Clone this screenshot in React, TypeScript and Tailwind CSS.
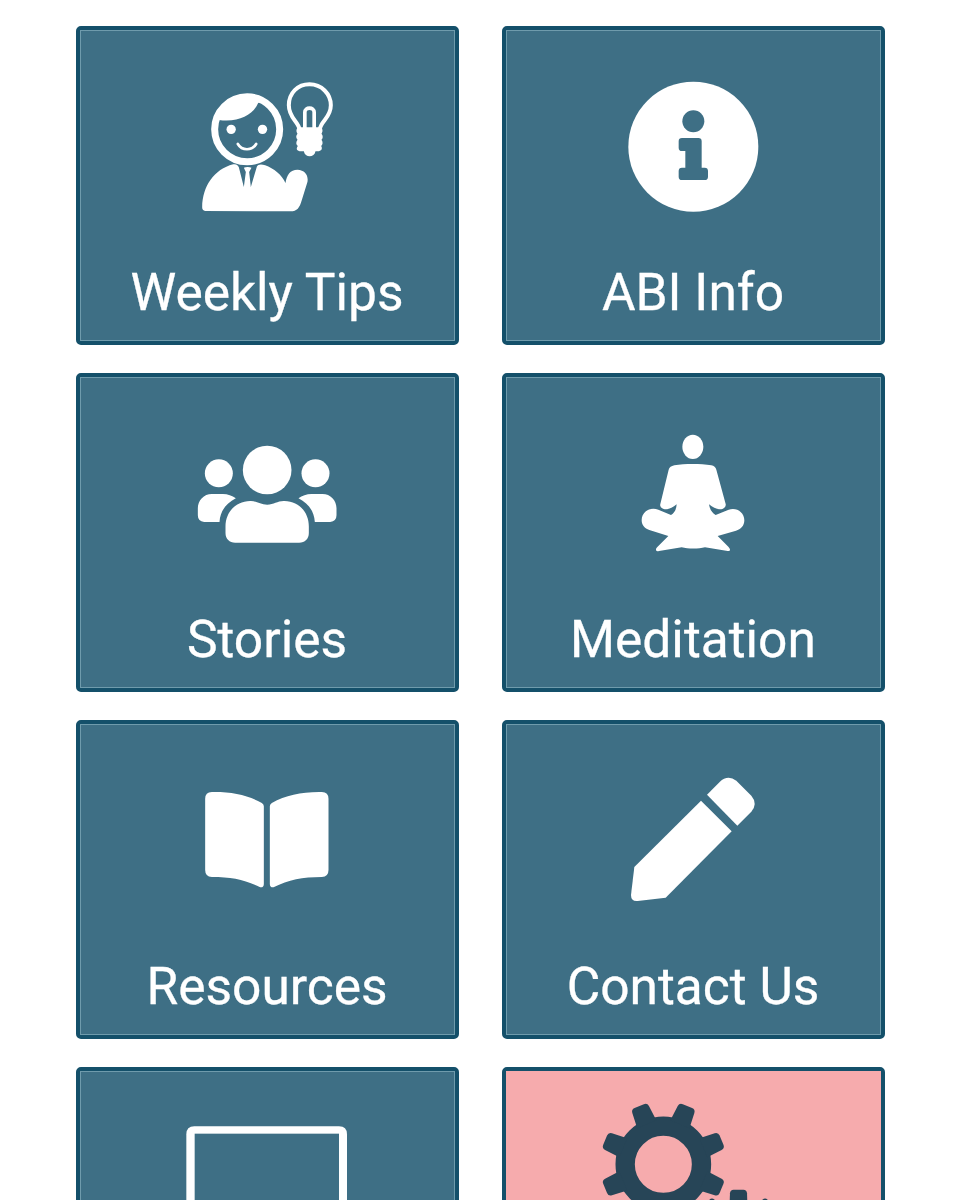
import React from 'react'
import clsx from 'clsx'

type IconProps = {
  viewBox: string
  children: React.ReactNode
}

const Icon = ({ viewBox, children }: IconProps) => (
  <svg viewBox={viewBox} className="w-[160px] h-[150px] overflow-visible" fill="currentColor" aria-hidden="true">
    {children}
  </svg>
)

const TipsIcon = () => (
  <Icon viewBox="-8.5 -1 480 450">
    {/* Head */}
    <circle cx="172" cy="177" r="97.500" fill="none" stroke="currentColor" strokeWidth="21" />
    <path d="M86 149C98 104 132 78 172 78C188 78 202 84 212 94L205 98C190 134 147 157 87 149Z" />
    <circle cx="124" cy="177" r="14" />
    <circle cx="218" cy="177" r="14" />
    <path d="M144 221C156 242 187 242 199 221" fill="none" stroke="currentColor" strokeWidth="8" strokeLinecap="round" />
    {/* Body */}
    <path d="M130 282C140 280 145 285 147 291L162 350L168 305L162 292C168 289 179 289 185 292L178 305L183 350L201 289C204 282 214 281 226 285C252 294 276 314 287 338C291 313 301 298 323 298C345 299 356 314 353 334L336 389C329 413 322 423 302 423L46 422Q37 421 37 411C38 347 73 297 130 282Z" />
    {/* Bulb */}
    <path d="M329 177C325 153 297 143 297 105C297 68 324 42 359 42C395 42 423 70 423 105C423 143 394 150 390 177" fill="none" stroke="currentColor" strokeWidth="12" />
    <path d="M345 178V126C345 109 373 109 373 126V178" fill="none" stroke="currentColor" strokeWidth="11" />
    <path d="M327 171H391C399 173 400 184 395 190C400 196 400 204 395 208C400 214 399 223 394 227C399 235 395 243 383 243H377C374 263 345 263 342 243H334C320 243 318 235 324 227C318 223 318 214 323 208C318 203 318 195 323 190C318 184 319 173 327 171Z" />
  </Icon>
)

const InfoIcon = () => (
  <Icon viewBox="9 0 480 450">
    <circle cx="250" cy="230" r="195" />
    <g className="text-[#3e6f85]">
      <circle cx="250" cy="154" r="33" />
      <path d="M216 204H265Q275 204 275 214V293H284Q294 293 294 303V320Q294 330 284 330H216Q206 330 206 320V303Q206 293 216 293H226V243H216Q206 243 206 233V214Q206 204 216 204Z" />
    </g>
  </Icon>
)

const StoriesIcon = () => (
  <Icon viewBox="-8.5 -39 480 450">
    <circle cx="87" cy="130" r="42" />
    <circle cx="377" cy="130" r="42" />
    <circle cx="232" cy="120" r="73" />
    <path d="M66 192H99C114 192 127 197 138 205C108 221 91 243 89 276H43Q24 274 24 256V235C24 211 42 192 66 192Z" />
    <path d="M398 192H365C350 192 337 197 326 205C356 221 373 243 375 276H421Q440 274 440 256V235C440 211 422 192 398 192Z" />
    <path d="M107 289C107 246 139 213 181 213C199 212 211 224 232 224C253 224 263 212 284 213C326 213 357 246 357 289V309C357 327 345 338 328 338H136C119 338 107 327 107 309Z" />
  </Icon>
)

const MeditationIcon = () => (
  <Icon viewBox="-51 -24 480 450">
    <ellipse cx="188.500" cy="65.500" rx="31.500" ry="36.500" />
    <path d="M133 121C165 116 211 116 244 121Q256 123 259 134L287 237Q289 247 279 251C264 256 251 249 237 238C239 252 246 264 257 270L296 254C319 246 343 261 343 286C343 303 332 313 318 317L263 333L295 365Q301 371 300 376Q299 379 293 378L225 367C206 372 174 372 155 367L87 378Q79 380 78 375Q77 371 82 366L115 333L58 315C44 310 35 301 35 285C36 259 61 245 85 254L123 270C134 264 139 252 140 238C126 249 114 256 99 251Q88 247 91 237L116 134Q119 124 133 121Z" />
  </Icon>
)

const ResourcesIcon = () => (
  <Icon viewBox="-8.5 -48 480 450">
    <path d="M66 36C126 35 173 45 216 69Q222 73 222 79V312Q222 323 211 322C165 299 125 291 66 291Q46 290 46 270V56Q46 37 66 36Z" />
    <path d="M396 36C336 35 289 45 246 69Q240 73 240 79V312Q240 323 251 322C297 299 337 291 396 291Q416 290 416 270V56Q416 37 396 36Z" />
  </Icon>
)

const ContactIcon = () => (
  <Icon viewBox="-21 -18 480 450">
    <path d="M243 92L335 184L137 383L53 393Q33 395 33 375L43 291Z" />
    <path d="M261 74L299 36Q323 13 349 32L394 77Q414 101 394 125L352 167Z" />
  </Icon>
)

const ScreenIcon = () => (
  <Icon viewBox="-9 2 480 450">
    <path d="M-11 420V72Q-11 48 13 48H447Q471 48 471 72V420Z" />
    <rect x="14" y="70" width="433" height="336" className="text-[#3e6f85]" />
  </Icon>
)

const toothAngles = [22.5, 67.5, 112.5, 157.5, 202.5, 247.5, 292.5, 337.5]

const bigTooth = 'M-31 -130L-27 -178Q-26 -189 -15 -189H15Q26 -189 27 -178L31 -130Z'
const smallTooth = 'M-37 -118L-35 -174Q-34 -189 -20 -189H20Q34 -189 35 -174L37 -118Z'

const SettingsIcon = () => (
  <Icon viewBox="69 153 480 450">
    <g transform="translate(220 313)">
      <circle r="114.500" fill="none" stroke="currentColor" strokeWidth="58" />
      {toothAngles.map((angle) => (
        <path key={angle} transform={`rotate(${angle})`} d={bigTooth} />
      ))}
    </g>
    <g transform="translate(445.5 527) scale(0.73) rotate(22.5)">
      <circle r="100" fill="none" stroke="currentColor" strokeWidth="52" />
      {toothAngles.map((angle) => (
        <path key={angle} transform={`rotate(${angle})`} d={smallTooth} />
      ))}
    </g>
  </Icon>
)

type Tile = {
  id: string
  label?: string
  icon: React.ComponentType
  highlight?: boolean
}

const tiles: Tile[] = [
  { id: 'tips', label: 'Weekly Tips', icon: TipsIcon },
  { id: 'info', label: 'ABI Info', icon: InfoIcon },
  { id: 'stories', label: 'Stories', icon: StoriesIcon },
  { id: 'meditation', label: 'Meditation', icon: MeditationIcon },
  { id: 'resources', label: 'Resources', icon: ResourcesIcon },
  { id: 'contact', label: 'Contact Us', icon: ContactIcon },
  { id: 'screen', icon: ScreenIcon },
  { id: 'settings', icon: SettingsIcon, highlight: true },
]

const MenuTile = ({ label, icon: TileIcon, highlight }: Tile) => (
  <button
    className={clsx(
      'h-[319px] rounded-[5px] border-4 border-[#14506a]',
      highlight ? 'bg-[#f6abad] text-[#274557]' : 'bg-[#3e6f85] text-white'
    )}
  >
    <span
      className={clsx(
        'flex h-full flex-col items-center border pt-[39px]',
        highlight ? 'border-[#f6abad]' : 'border-[#6f9bac]'
      )}
    >
      <TileIcon />
      {label && (
        <span className="mt-[43px] text-[51.5px] leading-[60px] whitespace-nowrap [-webkit-text-stroke:0.3px_white]">
          {label}
        </span>
      )}
    </span>
  </button>
)

export default function App() {
  return (
    <main className="h-[1200px] overflow-hidden bg-white pt-[26px] font-['Roboto',sans-serif]">
      <div className="mx-auto grid w-[809px] grid-cols-2 gap-x-[43px] gap-y-7">
        {tiles.map((tile) => (
          <MenuTile key={tile.id} {...tile} />
        ))}
      </div>
    </main>
  )
}
